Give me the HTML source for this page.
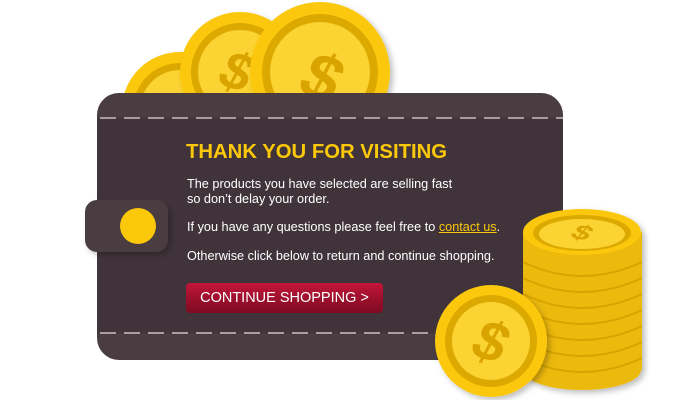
<!DOCTYPE html>
<html><head><style>
body{margin:0;width:700px;height:400px;background:#fff;overflow:hidden;position:relative;font-family:"Liberation Sans",Arial,sans-serif}
.abs{position:absolute}
</style></head><body>
<svg class="abs" style="left:0;top:0" width="700" height="400">
<defs>
<filter id="sh" x="-20%" y="-20%" width="140%" height="140%"><feDropShadow dx="3" dy="3" stdDeviation="3" flood-color="#000" flood-opacity="0.25"/></filter>
<g id="dollar"><text x="0" y="0" font-family="Liberation Sans" font-weight="bold" font-size="60" text-anchor="middle" dominant-baseline="central" transform="rotate(20) skewX(-8)" fill="#d9a400">$</text></g>
</defs>
<g filter="url(#sh)">
<circle cx="180" cy="110" r="58" fill="#fcc80a"/><circle cx="180" cy="110" r="47" fill="#dca900"/><circle cx="180" cy="110" r="40" fill="#fbd331"/>
</g>
<g filter="url(#sh)">
<circle cx="240" cy="72" r="60" fill="#fcc80a"/><circle cx="240" cy="72" r="49" fill="#dca900"/><circle cx="240" cy="72" r="42" fill="#fbd331"/>
<g transform="translate(237,72) scale(0.9)"><use href="#dollar"/></g>
</g>
<g filter="url(#sh)">
<circle cx="320" cy="72" r="70" fill="#fcc80a"/><circle cx="320" cy="72" r="58" fill="#dca900"/><circle cx="320" cy="72" r="50" fill="#fbd331"/>
<g transform="translate(322,78) scale(1.1)"><use href="#dollar"/></g>
</g>
<rect x="97" y="93" width="466" height="267" rx="22" fill="#4a3d42"/>
<rect x="97" y="118" width="466" height="215" fill="#40343a"/>
<line x1="100" y1="118" x2="563" y2="118" stroke="#a89ea2" stroke-width="2" stroke-dasharray="16 8"/>
<line x1="100" y1="333" x2="563" y2="333" stroke="#a89ea2" stroke-width="2" stroke-dasharray="16 8"/>
<rect x="85" y="200" width="83" height="52" rx="12" fill="#4a3c42" filter="url(#sh)"/>
<circle cx="138" cy="226" r="18" fill="#fcc80a"/>
<g filter="url(#sh)">
<rect x="523" y="232" width="119" height="138" fill="#ecb90b"/>
<ellipse cx="582" cy="370" rx="59" ry="20" fill="#ecb90b"/>
<g fill="none" stroke="#d9a400" stroke-width="2">
<path d="M523 262 Q582 290 642 262"/><path d="M523 278 Q582 306 642 278"/><path d="M523 294 Q582 322 642 294"/><path d="M523 310 Q582 338 642 310"/><path d="M523 326 Q582 354 642 326"/><path d="M523 342 Q582 370 642 342"/><path d="M523 358 Q582 386 642 358"/>
</g>
<ellipse cx="582" cy="232" rx="59" ry="23" fill="#fcc80a"/>
<ellipse cx="582" cy="233" rx="49" ry="18" fill="#dca900"/>
<ellipse cx="582" cy="234" rx="43" ry="15" fill="#fbd331"/>
<g transform="translate(582,233) scale(0.55,0.35)"><use href="#dollar"/></g>
</g>
<g filter="url(#sh)">
<circle cx="491" cy="341" r="56" fill="#fcc80a"/><circle cx="491" cy="341" r="46" fill="#dca900"/><circle cx="491" cy="341" r="39" fill="#fbd331"/>
<g transform="translate(491,342) scale(0.95)"><use href="#dollar"/></g>
</g>
</svg>
<div class="abs" style="left:186px;top:141px;color:#fcc80a;font-weight:bold;font-size:20.3px">THANK YOU FOR VISITING</div>
<div class="abs" style="left:187px;top:177px;color:#fff;font-size:12.7px;line-height:15px">The products you have selected are selling fast<br>so don’t delay your order.</div>
<div class="abs" style="left:187px;top:220px;color:#fff;font-size:12.7px">If you have any questions please feel free to <span style="color:#fcc80a;text-decoration:underline">contact us</span>.</div>
<div class="abs" style="left:187px;top:249px;color:#fff;font-size:12.7px">Otherwise click below to return and continue shopping.</div>
<div class="abs" style="left:186px;top:283px;width:197px;height:30px;border-radius:4px;background:linear-gradient(#c4163a,#9a0f2c 55%,#7e0b22);color:#fff;font-size:14.5px;line-height:31px;text-align:center">CONTINUE SHOPPING &gt;</div>
</body></html>
